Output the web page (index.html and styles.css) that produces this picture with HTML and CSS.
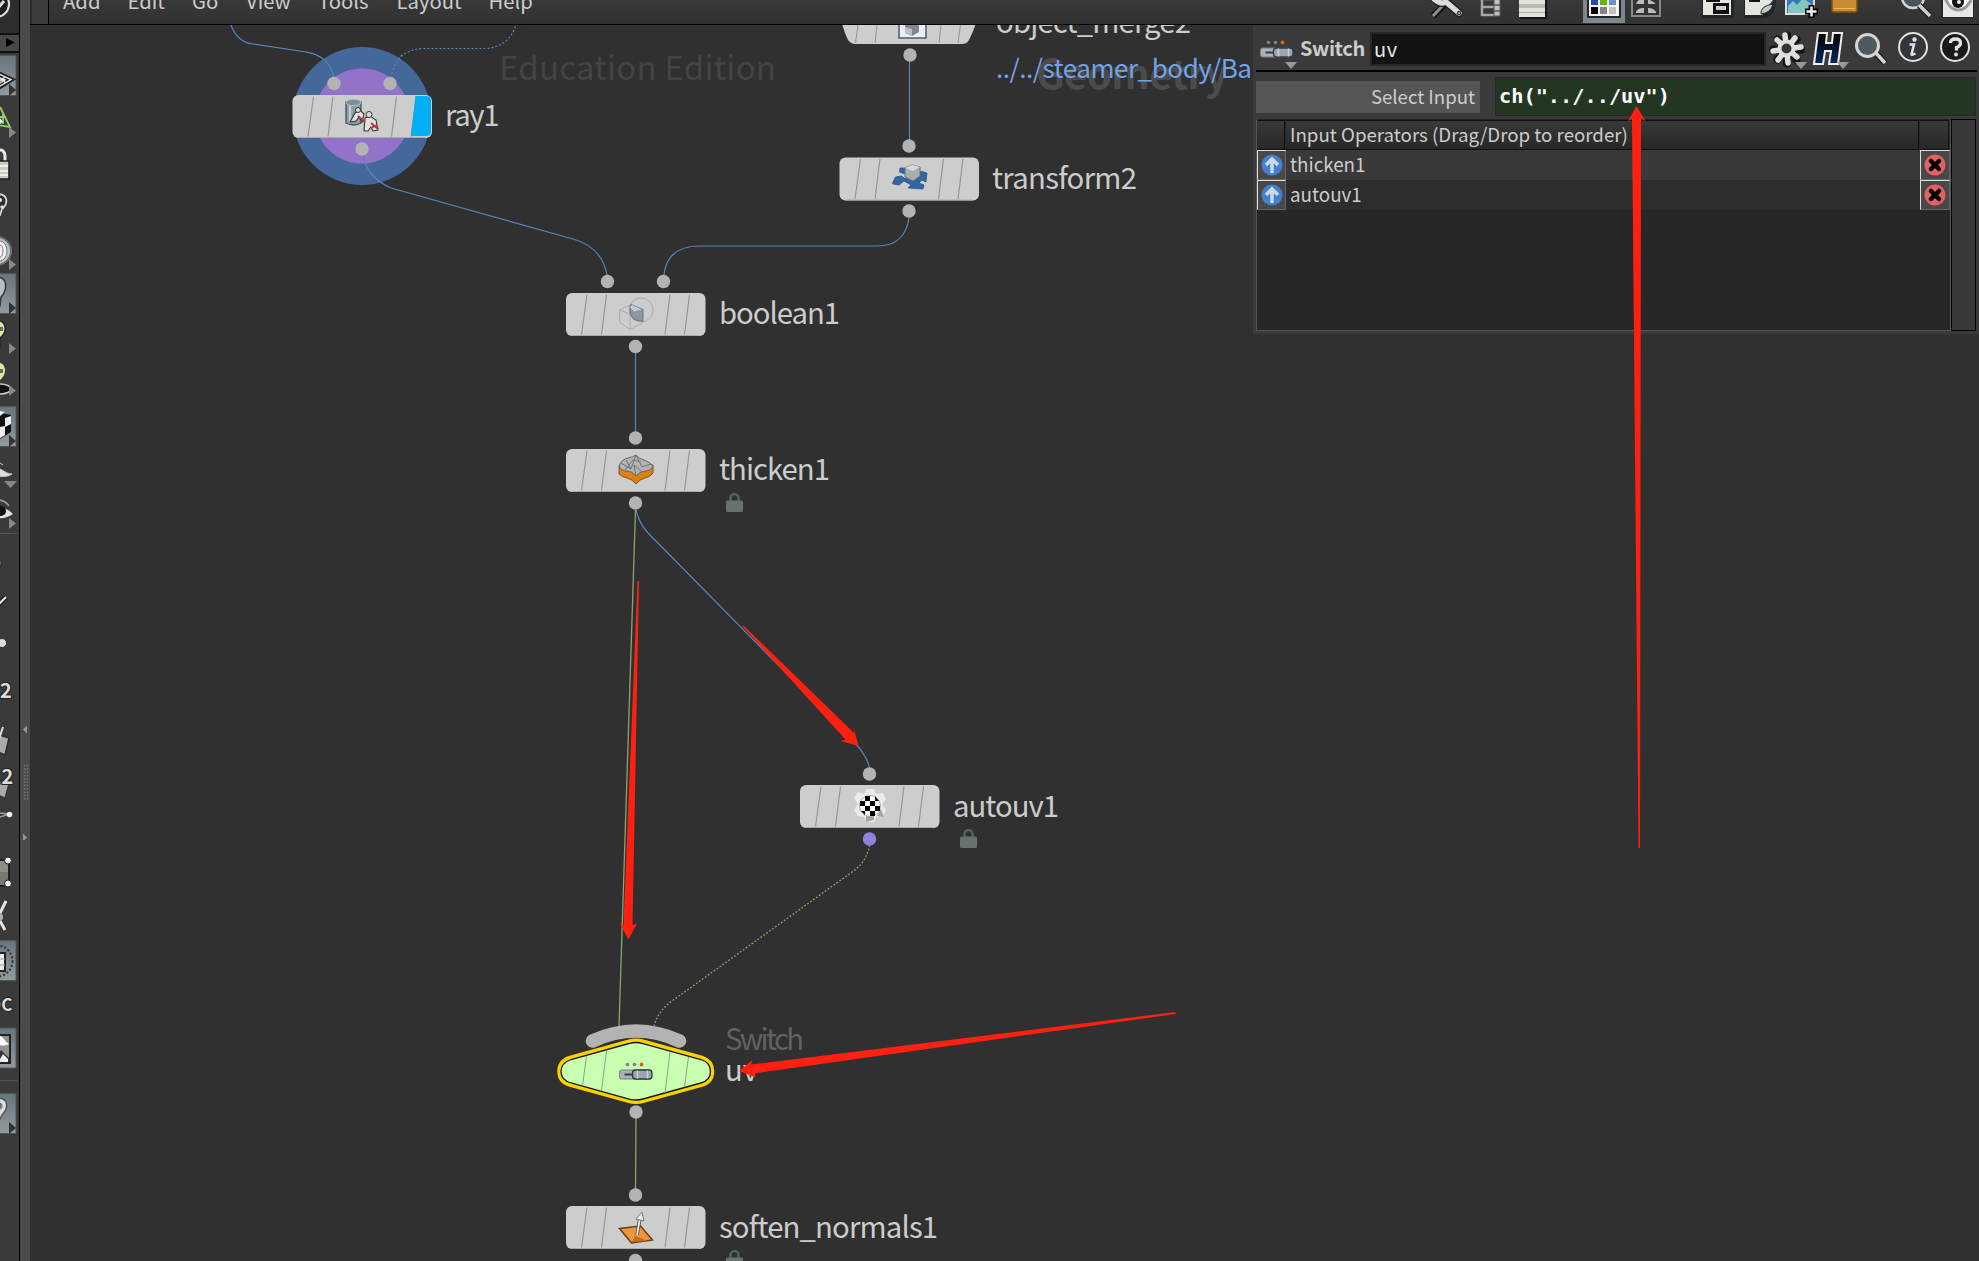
FILE: index.html
```html
<!DOCTYPE html>
<html lang="en">
<head>
<meta charset="utf-8">
<title>Network Editor</title>
<link rel="stylesheet" href="styles.css">
</head>
<body>
<div class="app">
  <aside class="tools">
    <svg height="33" viewBox="0 0 19 33"><rect width="19" height="33" fill="#2d2d2d"/><circle cx="-4" cy="4" r="13" fill="#1c2022" stroke="#ddd" stroke-width="2.2"/><path d="M-2 8L4 1" stroke="#ddd" stroke-width="3"/></svg>
    <svg height="20" viewBox="0 33 19 20"><rect y="33" width="19" height="20" fill="#111"/><rect y="35" width="19" height="16" fill="#484848"/><path d="M6 38v9l9-4.500z" fill="#000"/></svg>
    <svg height="44" viewBox="0 53 19 44"><use href="#sel" y="55"/><path d="M-10 79L0 74l12 5.500L0 87l-10-4z" fill="#222" stroke="#222" stroke-width="4"/><path d="M-10 79L0 74.500l11 5L0 86l-10-4zM-4 80l4-2 5 2-5 3zM-3 76l9 7M5 77l-8 6" fill="none" stroke="#e6e6e6" stroke-width="1.400"/><path d="M9 84v12l7-6z" fill="#333"/></svg>
    <svg height="45" viewBox="0 97 19 45"><path d="M0 107l10 20-12-2M0 117h5M3 114v10" fill="none" stroke="#93cf6a" stroke-width="1.800"/><path d="M0 118l3 4-3 2" fill="#eee"/><use href="#more" y="127"/></svg>
    <svg height="44" viewBox="0 142 19 44"><path d="M-4 160v-4a4.500 6 0 0 1 9 0v6" fill="none" stroke="#e8e8e8" stroke-width="3"/><rect x="-10" y="161" width="19" height="18" fill="#c9c8c1" stroke="#1c1f20" stroke-width="1.500"/><path d="M0 166h8M0 171h8M0 175h8" stroke="#f0f0ea" stroke-width="2"/></svg>
    <svg height="44" viewBox="0 186 19 44"><path d="M-3 194c12 0 11 10 5 15l-2 6h-4" fill="#2b3133" stroke="#d5d5d5" stroke-width="1.800"/><circle cx="0" cy="200" r="2" fill="#eee"/><circle cx="2" cy="207" r="1.700" fill="#ddd"/></svg>
    <svg height="42" viewBox="0 230 19 42"><circle cx="-3" cy="251" r="14" fill="#bfc3c2" stroke="#65747b" stroke-width="2"/><ellipse cx="0" cy="251" rx="7" ry="10" fill="#f3f3f3" stroke="#777"/><ellipse cx="0" cy="251" rx="3" ry="6" fill="none" stroke="#777"/><use href="#more" y="259"/></svg>
    <svg height="43" viewBox="0 272 19 43"><use href="#sel" y="273"/><path d="M-4 277c14 0 10 15 5 20l-1 9h-5" fill="#bbbfbd" stroke="#30383b" stroke-width="1.500"/><path d="M9 302v12l7-6z" fill="#333"/></svg>
    <svg height="44" viewBox="0 315 19 44"><path d="M-5 320c13 0 12 13 5 18v8h-5" fill="#e4e3a2" stroke="#22282b" stroke-width="1.500"/><path d="M0 329h3" stroke="#666" stroke-width="4"/><use href="#more" y="343"/></svg>
    <svg height="44" viewBox="0 359 19 44"><ellipse cx="0" cy="389" rx="11" ry="5" fill="#111" stroke="#ccc" stroke-width="1.500"/><path d="M-5 362c13 0 12 13 5 18v7h-5" fill="#e4e3a2"/><path d="M0 371h3" stroke="#666" stroke-width="4"/><use href="#more" y="385"/></svg>
    <svg height="46" viewBox="0 403 19 46"><use href="#sel" y="406"/><path d="M-4 412l15 3v17l-13 8h-2z" fill="#111"/><path d="M0 411l5 1-5 4zM5 418l6-2v8l-6 3zM0 427l5-1v9l-5 3z" fill="#eee"/><path d="M9 435v12l7-6z" fill="#333"/></svg>
    <svg height="43" viewBox="0 449 19 43"><path d="M0 463l3 2M-3 468c7 2 9 6 15 6-6 4-12 2-15 2z" fill="#ddd" stroke="#ccc"/><path d="M4 481h13l-6.500 7z" fill="#888"/></svg>
    <svg height="42" viewBox="0 492 19 42"><path d="M-2 500q7 0 11 6" stroke="#999" fill="none" stroke-width="1.500"/><path d="M-2 506q9 2 15 8-7 5-15 4z" fill="#e3e3dc"/><circle cx="1" cy="511" r="5" fill="#111"/><use href="#more" y="518"/><path d="M0 533.500h17" stroke="#555"/></svg>
    <svg height="46" viewBox="0 534 19 46"><circle cx="-2" cy="563" r="4" fill="#555" stroke="#24282a"/></svg>
    <svg height="45" viewBox="0 580 19 45"><path d="M-2 605l8-8" stroke="#1e2426" stroke-width="5"/><path d="M-2 605l8-8" stroke="#e5e5e5" stroke-width="2"/></svg>
    <svg height="45" viewBox="0 625 19 45"><circle cx="2" cy="643" r="4.500" fill="#ddd" stroke="#333"/></svg>
    <svg height="40" viewBox="0 670 19 40"><text x="0" y="698" class="tool-text">2</text></svg>
    <svg height="55" viewBox="0 710 19 55"><path d="M-4 734l13 4-4 17-12-5z" fill="#a9aaa7" stroke="#282c2d" stroke-width="1.500"/><path d="M-3 745l6-18" stroke="#ddd" stroke-width="2"/></svg>
    <svg height="41" viewBox="0 765 19 41"><path d="M-4 780l13 3-4 15-11-5z" fill="#aaa" stroke="#282c2d"/><text x="-5" y="784" class="tool-text">.2</text></svg>
    <svg height="39" viewBox="0 806 19 39"><path d="M0 817l9-3M0 813l9 1" stroke="#9aa192" stroke-width="1.500"/><circle cx="9.500" cy="814.500" r="2.800" fill="#f1f1f1"/></svg>
    <svg height="50" viewBox="0 845 19 50"><path d="M-5 860H9v26H-5z" fill="#767873" stroke="#1d2223" stroke-width="2"/><path d="M-3 861H8v11H-3z" fill="#8c8e88"/><circle cx="8" cy="860.500" r="3.500" fill="#eee" stroke="#222"/><circle cx="8" cy="883.500" r="3.500" fill="#eee" stroke="#222"/></svg>
    <svg height="43" viewBox="0 895 19 43"><path d="M6 901L0 913M0 921l5 9" stroke="#e5e5e5" stroke-width="3"/><circle cx="-1" cy="917" r="4" fill="#b5b2a2"/></svg>
    <svg height="46" viewBox="0 938 19 46"><use href="#sel" y="940"/><circle cx="-3" cy="961" r="15.500" fill="none" stroke="#333" stroke-dasharray="2 2" stroke-width="2"/><path d="M-8 953H5v18H-8z" fill="#eee" stroke="#222" stroke-width="2"/><path d="M-3 959h8M-3 965h8" stroke="#999"/></svg>
    <svg height="40" viewBox="0 984 19 40"><text x="-11" y="1011" class="tool-text dc">DC</text></svg>
    <svg height="46" viewBox="0 1024 19 46"><use href="#sel" y="1027.500"/><path d="M-3 1035H10v28H-3z" fill="#8f918e" stroke="#222" stroke-width="2"/><path d="M0 1036c4 1 4 5 9 8-4 2-8 2-9 1z" fill="#fff"/><path d="M-2 1056l3-6 8 8v4H-2z" fill="#333"/><path d="M0 1059l3-5 5 5v3H0z" fill="#eee"/></svg>
    <svg height="20" viewBox="0 1070 19 20"><path d="M0 1080.500h17" stroke="#555"/></svg>
    <svg height="46" viewBox="0 1090 19 46"><use href="#sel" y="1093"/><path d="M-3 1098c13 0 11 11 5 17l-4 8h-3" fill="#ddd" stroke="#555" stroke-width="1.500"/><circle cx="-1" cy="1106" r="3.500" fill="#777"/><path d="M9 1122v12l7-6z" fill="#333"/></svg>
  </aside>
  <div class="splitter">
    <svg width="10" height="120" viewBox="20 720 10 120"><path d="M27 725.500v8l-4-4zM23 833.500v8l4-4z" fill="#999"/><path d="M24.500 765v35M27.500 765v35" stroke="#777" stroke-width="1.700" stroke-dasharray="1.500 1.800"/></svg>
  </div>
  <main class="editor">
    <header class="topbar">
      <div class="grip"></div>
      <nav class="menu"><span class="m-add">Add</span><span class="m-edit">Edit</span><span class="m-go">Go</span><span class="m-view">View</span><span class="m-tools">Tools</span><span class="m-layout">Layout</span><span>Help</span></nav>
      <div class="icons">
        <svg width="50" viewBox="1425 0 50 24"><path d="M1433 16l17-16" stroke="#111" stroke-width="6"/><path d="M1433 16l15-16" stroke="#8d8f8a" stroke-width="3"/><path d="M1434-1q7 6 12 3l13 11" fill="none" stroke="#222" stroke-width="8" stroke-linecap="round"/><path d="M1434-1q7 6 12 3l13 11" fill="none" stroke="#ddddd7" stroke-width="5.500" stroke-linecap="round"/><circle cx="1459" cy="13" r="1.800" fill="#999" stroke="#222"/></svg>
        <svg width="35" viewBox="1475 0 35 24"><path d="M1482-2v17h13M1482 7h13M1484-1h10" fill="none" stroke="#a5a8a0" stroke-width="2.500"/><path d="M1494-1h6v6h-6zm0 6h6v6h-6zm0 6h6v5h-6z" fill="#bfc0b9" stroke="#555"/></svg>
        <svg width="60" viewBox="1510 0 60 24"><path d="M1520 0h27v19h-27z" fill="#161616"/><path d="M1519 0h26v17h-26z" fill="#e4e4df"/><path d="M1519 4h26v4h-26z" fill="#bbbcb4"/><path d="M1519 12h26v1h-26z" fill="#b0b0aa"/></svg>
        <svg width="57" viewBox="1570 0 57 24"><path d="M1583 0h42v23h-42z" fill="#7d878c"/><path d="M1587 0h34v18h-34z" fill="#22272a"/><path d="M1589 0h30v16h-30z" fill="#f4f4f4"/><path d="M1591 0h7v5h-7z" fill="#264ba0"/><path d="M1600 0h7v5h-7z" fill="#68b70e"/><path d="M1609 0h7v5h-7z" fill="#6b93c4"/><path d="M1591 7h7v7h-7z" fill="#000"/><path d="M1600 7h7v7h-7z" fill="#83847f"/><path d="M1609 7h7v7h-7z" fill="#c1c3bb"/></svg>
        <svg width="63" viewBox="1627 0 63 24"><path d="M1632-4h28v20h-28z" fill="#333" stroke="#888" stroke-width="2"/><path d="M1636 4q2-5 8-7v7zM1648-1q4 2 8 5h-8zM1636 12q1-4 8-4v5h-8zM1648 8q6 0 8 4v1h-8z" fill="#bbb"/></svg>
        <svg width="50" viewBox="1690 0 50 24"><path d="M1702 0h32v18h-32z" fill="#20272a"/><path d="M1703 0h28v15h-28z" fill="#e7e7e2"/><path d="M1706 0h14v2h-14zM1713 3h16v11h-16z" fill="#111"/><path d="M1716 6h10v4h-10z" fill="#ccc"/></svg>
        <svg width="40" viewBox="1740 0 40 24"><path d="M1744 0h32q-1 18-13 18h-19z" fill="#20272a"/><path d="M1745 0h28l-8 10-3 5h-17z" fill="#e5e5df"/><path d="M1749 0h11v2h-11z" fill="#111"/><path d="M1761 14q-1-8 12-10-2 9-12 10z" fill="#c6c7c0" stroke="#222"/></svg>
        <svg width="45" viewBox="1780 0 45 24"><path d="M1785-4h30v19h-30z" fill="#ddd"/><path d="M1787-4h26v17h-26z" fill="#347ab8"/><path d="M1788 13V6l5-5 4 4 6-7 8 6v9z" fill="#83c6be"/><path d="M1811.500 5v13M1805 11.500h13" stroke="#000" stroke-width="6"/><path d="M1811.500 6.500v10M1806.500 11.500h10" stroke="#eee" stroke-width="2.500"/></svg>
        <svg width="55" viewBox="1825 0 55 24"><path d="M1832-2h25v12q0 2-2 2h-21q-2 0-2-2z" fill="#c98a30" stroke="#82500c" stroke-width="1.500"/><path d="M1834 8.500h21" stroke="#eab660"/></svg>
        <svg width="57" viewBox="1880 0 57 24"><circle cx="1913" cy="-3" r="11" fill="#49545a" stroke="#d5d5cf" stroke-width="2.500"/><path d="M1919 5l11 11" stroke="#1b1b1b" stroke-width="6"/><path d="M1919 5l11 11" stroke="#d0d0ca" stroke-width="3.500"/></svg>
        <svg width="42" viewBox="1937 0 42 24"><path d="M1941 0h33v18h-33z" fill="#22282a"/><path d="M1943 0h30v17h-30z" fill="#e7e7e5"/><path d="M1945-2q5 12 13 12t13-10" fill="#fff" stroke="#999" stroke-width="3"/><circle cx="1958" cy="2" r="6" fill="#111"/><circle cx="1959" cy="2" r="2" fill="#eee"/></svg>
      </div>
    </header>
    <div class="workspace">
      <svg class="network" viewBox="30 25 1949 1236">
        <defs>
          <linearGradient id="steel" x2="0" y2="1"><stop stop-color="#66757c"/><stop offset="1" stop-color="#929a9e"/></linearGradient>
          <linearGradient id="navy" x2="0" y2="1"><stop stop-color="#000"/><stop offset="1" stop-color="#06295c"/></linearGradient>
          <g id="sel"><path d="M-1 .5h17v40H-1z" fill="url(#steel)" stroke="#555"/></g>
          <path id="more" d="M9 0v11l7-5.500z" fill="#888"/>
          <g id="node"><rect width="139.500" height="43" rx="6" fill="#cdcdcd"/><path d="M6 42.500h127" stroke="#aaa"/><use href="#slits"/></g>
          <path id="slits" d="M21 1.500L15.500 41.500M40.500 1.500L35.500 41.500M104 1.500l-5 40M123.500 1.500L118.500 41.500" stroke="#929292" stroke-width="1.100"/>
          <g id="lock"><path d="M4.500 9V5.500a4 4 0 0 1 8 0V9" fill="none" stroke="#536160" stroke-width="2.500"/><rect y="8" width="17" height="11.500" rx="1.500" fill="#667270"/></g>
          <g id="switch"><circle cx="9" cy="3" r="1.800" fill="#79818a"/><circle cx="16" cy="3" r="1.800" fill="#79818a"/><circle cx="23" cy="3" r="1.900" fill="#d46b14"/><rect x="1" y="8.500" width="32" height="9" rx="2" fill="#aab2b8" stroke="#788087"/><path d="M6 13h10" stroke="#333b44" stroke-width="2"/><rect x="14" y="8.500" width="19.500" height="9" rx="3" fill="#9ba5b0" stroke="#333942" stroke-width="1.300"/><path d="M19 9v8M29 9v8" stroke="#c8d0d8" stroke-width="1.500"/></g>
        </defs>
        <g fill="none" stroke="#5784bd" stroke-width="1.200">
          <path d="M231 25Q237 42 253 44L306 52Q330 56 334 78" />
          <path d="M909.500 60V140M909 218Q905 246 877 246H700Q667 246 664 275M635.500 352V432"/>
          <path d="M636 510Q639 523 648 533L855 743Q867 756 869.500 768"/>
          <path d="M391 78Q396 48.500 425 48.500H485Q508 48 516 25" stroke-dasharray="2 2"/>
        </g>
        <g stroke="#8ba36c" stroke-width="1.300" fill="none"><path d="M635.500 510L619 1026M636 1118L635.500 1190"/><path d="M869.500 845Q867 862 852 872L672 1001Q658 1011 654 1026" stroke-dasharray="1.800 1.800"/></g>
        <text class="wm" x="499" y="80" textLength="277">Education Edition</text>
        <circle cx="362" cy="116" r="69" fill="#45689a"/><circle cx="362" cy="116" r="47.500" fill="#9273c9"/>
        <g fill="none" stroke="#5784bd" stroke-width="1.200"><path d="M306 52Q330 56 334 78M363 156Q368 178 391 188L573 239Q602 247 607 275"/><path d="M391 78Q394 62 403 54" stroke-dasharray="2 2"/></g>
        <use href="#node" x="292.500" y="95"/><path d="M415.500 96H426q5 0 5 5v30q0 5-5 5H411z" fill="#00aef5"/>
        <path d="M841 20h136q-3 10-8 20-2 4-7 4H855q-4 0-7-4-4-8-7-20z" fill="#cdcdcd"/><path d="M858 25l-2.500 18M877 25l-2 18M941 25l-2 18M960.500 25l-2.500 18" stroke="#929292"/>
        <use href="#node" x="839.500" y="157.500"/><use href="#node" x="566" y="293"/><use href="#node" x="566" y="449"/><use href="#node" x="800" y="785"/><use href="#node" x="566" y="1206"/>
        <g fill="#b3b3b3"><circle cx="334" cy="83.500" r="6.700"/><circle cx="390" cy="83.500" r="6.700"/><circle cx="362" cy="149" r="6.700"/><circle cx="910" cy="55" r="6.700"/><circle cx="909" cy="146" r="6.700"/><circle cx="909" cy="211" r="6.700"/><circle cx="607.500" cy="281.500" r="6.700"/><circle cx="663.500" cy="281.500" r="6.700"/><circle cx="635.500" cy="346.500" r="6.700"/><circle cx="635.500" cy="438" r="6.700"/><circle cx="635.500" cy="503" r="6.700"/><circle cx="869.500" cy="774" r="6.700"/><circle cx="869.500" cy="839" r="6.700" fill="#9180dd"/><circle cx="636" cy="1112" r="6.700"/><circle cx="635.500" cy="1195" r="6.700"/><circle cx="635.500" cy="1260.500" r="6.700"/></g>
        <!-- switch node -->
        <path d="M592.500 1041Q636 1021 679.500 1041" fill="none" stroke="#b3b3b3" stroke-width="13.500" stroke-linecap="round"/>
        <path d="M628 1041.500Q636 1039 644 1041.500L702 1057.500Q712.500 1061 712.500 1071.500T702 1085L644 1101Q636 1103.500 628 1101L570 1085Q559 1082 559 1071.500T570 1057.500Z" fill="#c8ffb0" stroke="#fbd100" stroke-width="3.500"/>
        <path d="M629 1043.500Q636 1041.500 643 1043.500L701 1059.500Q710.500 1062.500 710.500 1071.500T701 1083L643 1099Q636 1101 629 1099L571 1083Q561 1080 561 1071.500T571 1059.500Z" fill="none" stroke="#15180c" stroke-width="1.300"/>
        <path d="M586.500 1056l-4 30M606.500 1051l-5 40M670 1052l-5 41M688.500 1057l-4 30" stroke="#88a87b"/>
        <use href="#switch" x="618.500" y="1061.500"/>
        <!-- node icons -->
        <g><path d="M346 102v21q8 4 15 0v-21z" fill="#899ca6" stroke="#41545f" stroke-width="1.300"/><path d="M350 106v17" stroke="#c0cdd4" stroke-width="2.500"/><ellipse cx="353.500" cy="102.500" rx="7.500" ry="3.200" fill="#7d919b" stroke="#b5c1c8"/><path d="M355 113l5-3 4 4-2 8-3-5-3 4-6 1zM364 131l1-13 5-2 6 4 2 10-5 1-2-4-3 4z" fill="#e0e0df" stroke="#333" stroke-width="1.100"/><circle cx="358" cy="110" r="2.500" fill="#ddd" stroke="#333"/><circle cx="369" cy="114.500" r="3" fill="#ddd" stroke="#333"/><path d="M358 116l7 6M371 123l7 6M371 128l6-3" stroke="#b83337" stroke-width="1.800"/></g>
        <path d="M899 24h27v14h-27z" fill="#eee" stroke="#41607a" stroke-width="1.500"/><path d="M905 25h14v7l-7 4-7-3z" fill="#7f898d"/><path d="M905 27l7 2v7l-7-3z" fill="#b9c1c3"/>
        <g><path d="M900 168h8l-1 3 10 3 3-3 7 2-1 9-4-2-3 3 5 2-1 4-15-1 3-3-7-4-5 4-6-1-.5-1 3-6 6-1 4 3 2-4-8-3z" fill="#3166a6" stroke="#204d83" stroke-width=".7"/><path d="M905 168l7-3 8 2v9l-7 5-8-4z" fill="#a9aeae" stroke="#6c7375"/><path d="M905 168l8 3 7-4-8-2z" fill="#d9dcda"/></g>
        <g fill="none" stroke="#a9acac"><path d="M619.500 310l10-5 13 6v12l-12.500 6.500-10-7zM619.500 310l10.500 4v15M630 314l12-4"/><circle cx="641" cy="310" r="12"/><path d="M631 304.500l12 5v12l-9-2q-5-5-4-12z" fill="#8a98a2" stroke="#66747d"/><path d="M632 305l10 4.500-8 2-4-4z" fill="#c3cbd0" stroke="none"/></g>
        <g stroke-linejoin="round"><path d="M619 466v8q3 3 8 4t9 6q4-5 9-6t8-5v-8z" fill="#dd8116" stroke="#855019"/><path d="M619 466q3-7 9-8 5-1 8-3 3 4 8 5 6 2 9 6-2 5-8 5-6 1-9 5-4-5-9-5-6 0-8-5z" fill="#b1b4b3" stroke="#636666"/><path d="M621 463l10 6 5-14 6 12 9-3M631 469l-5-9M636 476l-2-11 8 7M625 470l8-10 8 2" fill="none" stroke="#717474"/></g>
        <g><path d="M866 789h8l2 5 7-1 3 6-4 5 4 6-3 6-7 1-2 5h-8l-2-5-6-1-4-6 4-6-4-6 4-6 6 2z" fill="#ebebeb"/><path d="M877 816l4-7 3 8zM866 822v-6l4-4 4 4v4z" fill="#a4a4a1"/><circle cx="870" cy="806" r="10.500" fill="#fff" stroke="#aaa"/><path d="M865 796h5v5h-5zM875 796l4 5h-4zM860 801h5v5h-5zM870 801h5v5h-5zM865 806h5v5h-5zM875 806h5v5h-5zM861 811h4v4zM870 811h5v5h-5z" fill="#000"/></g>
        <path d="M619.500 1228.500l21-2.500 12 14-21 3z" fill="#ee963d" stroke="#6b3b13" stroke-width="1.500"/><path d="M635 1236l13 5-16 1z" fill="#c36c19"/><path d="M637 1235l3-17" stroke="#444" stroke-width="3.500"/><path d="M637 1235l3-17" stroke="#eee" stroke-width="1.800"/><path d="M636 1219l6-7 2 9z" fill="#eee" stroke="#777"/>
        <use href="#lock" x="726" y="492.500"/><use href="#lock" x="960" y="828.500"/><use href="#lock" x="726" y="1249.500"/>
        <g class="names"><text x="445" y="126" textLength="54.500">ray1</text><text x="996" y="33" textLength="195">object_merge2</text><text x="992" y="189" textLength="145">transform2</text><text x="719" y="324" textLength="121">boolean1</text><text x="719" y="479.500" textLength="111">thicken1</text><text x="953" y="816.500" textLength="106">autouv1</text><text x="719" y="1237.500" textLength="219">soften_normals1</text><text x="725" y="1081">uv</text><text class="type" x="725" y="1050" textLength="79">Switch</text></g>
        <text class="geo" x="1036" y="89" textLength="192">Geometry</text><text class="path" x="996" y="78" textLength="256">../../steamer_body/Ba</text>
      </svg>
      <section class="panel">
        <div class="titlebar">
          <svg width="44" height="42" viewBox="1256 28 44 42"><use href="#switch" x="1259.500" y="39.500"/><path d="M1285 62h12l-6 7z" fill="#999"/></svg>
          <b>Switch</b><div class="namefield">uv</div>
          <svg width="42" height="42" viewBox="1768 28 42 42"><g stroke="#161616" stroke-width="8" stroke-linecap="round"><path d="M1787 35.500v28M1773 49.500h28M1777.500 39.500l19 20M1796.500 39.500l-19 20"/></g><g stroke="#dfe0dc" stroke-width="5.500" stroke-linecap="round"><path d="M1785 35l3 28M1773 51l28-4M1777 40l20 17M1795 38l-17 22"/></g><circle cx="1786.500" cy="48.500" r="7" fill="#343738" stroke="#dfe0dc" stroke-width="4"/><path d="M1795 62h12l-6 7z" fill="#999"/></svg>
          <svg width="42" height="42" viewBox="1810 28 42 42"><path d="M1818 33h9l-1 10h6l1-10h9l-4 31h-9l2-13h-6l-2 13h-9z" fill="url(#navy)" stroke="#eee" stroke-width="2"/><path d="M1837 62h12l-6 7z" fill="#999"/></svg>
          <svg width="41" height="42" viewBox="1852 28 41 42"><path d="M1876 53l9 10" stroke="#161616" stroke-width="6"/><circle cx="1867.500" cy="45.500" r="11" fill="#4d5a60" stroke="#d5d6d1" stroke-width="3"/><path d="M1876 53l9 10" stroke="#d5d6d1" stroke-width="3.500"/></svg>
          <svg width="42" height="42" viewBox="1893 28 42 42"><circle cx="1913" cy="47" r="14" fill="#30383d" stroke="#e2e2df" stroke-width="2"/><circle cx="1914.500" cy="39.500" r="2.200" fill="#e2e2df"/><path d="M1909.500 44.500h4.500l-2.500 10q0 1 4-1" fill="none" stroke="#e2e2df" stroke-width="2.500"/></svg>
          <svg width="42" height="42" viewBox="1935 28 42 42"><circle cx="1955" cy="47" r="14" fill="#181b1d" stroke="#e2e2df" stroke-width="2"/><path d="M1950.500 43q0-4 5-4t5 4q0 3-4 4.500v3" fill="none" stroke="#e2e2df" stroke-width="3.300"/><circle cx="1956" cy="54.500" r="2" fill="#e2e2df"/></svg>
        </div>
        <div class="param"><span class="label">Select Input</span><div class="expr">ch("../../uv")</div></div>
        <div class="listing">
          <div class="grid">
            <div class="row head"><span></span><span>Input Operators (Drag/Drop to reorder)</span><span></span></div>
            <div class="row odd"><i><svg class="badge" viewBox="0 0 22 22"><circle cx="11" cy="11" r="10.500" fill="#4481cd"/><path d="M11 19V6M5 11l6-6 6 6" fill="none" stroke="#cbd8e8" stroke-width="3.500"/></svg></i><span>thicken1</span><i><svg class="badge" viewBox="0 0 22 22"><circle cx="11" cy="11" r="10.500" fill="#e75f60"/><path d="M7 7l8 8M15 7l-8 8" stroke="#000" stroke-width="4.500" stroke-linecap="round"/></svg></i></div>
            <div class="row even"><i><svg class="badge" viewBox="0 0 22 22"><circle cx="11" cy="11" r="10.500" fill="#4481cd"/><path d="M11 19V6M5 11l6-6 6 6" fill="none" stroke="#cbd8e8" stroke-width="3.500"/></svg></i><span>autouv1</span><i><svg class="badge" viewBox="0 0 22 22"><circle cx="11" cy="11" r="10.500" fill="#e75f60"/><path d="M7 7l8 8M15 7l-8 8" stroke="#000" stroke-width="4.500" stroke-linecap="round"/></svg></i></div>
          </div>
          <div class="scroll"></div>
        </div>
      </section>
    </div>
  </main>
  <svg class="arrows" viewBox="0 0 1979 1261" fill="#ff2012">
    <path d="M637.500 581h1.500L632.500 925l4.500-1.500-8.500 16-8.500-16 3.500 1.500z"/>
    <path d="M742.500 626.500l1-1L854 733l-.500-5.500L858.500 746 840.500 741l5-1.500z"/>
    <path d="M1175.500 1012v2L754 1073.500l2 4-17-6.500 13.500-11-1.500 4.500z"/>
    <path d="M1638.500 848h1.500L1641 119l4.500 2-9-15-8.500 15 4-2z"/>
  </svg>
</div>
</body>
</html>
```

FILE: styles.css
```css
* { box-sizing: border-box; }
body { margin: 0; background: #303030; font-family: "Noto Sans CJK SC", "Noto Sans", sans-serif; color: #ccc; overflow: hidden; }
svg { display: block; flex: none; }
.app { position: relative; display: flex; width: 1979px; height: 1261px; overflow: hidden; }
.tools { width: 20px; flex: none; background: #3a3a3a; border-right: 1px solid #000; overflow: hidden; }
.tools svg { width: 19px; }
.tool-text { font-size: 20px; font-weight: bold; fill: #ddd; stroke: #222; stroke-width: 2px; paint-order: stroke; }
.tool-text.dc { font-size: 17px; }
.splitter { width: 10px; flex: none; background: #4a4a4a; padding-top: 720px; }
.editor { flex: 1; display: flex; flex-direction: column; min-width: 0; }
.topbar { height: 25px; flex: none; display: flex; overflow: hidden; background: linear-gradient(#383838, #323232); border-bottom: 1px solid #000; }
.grip { width: 19px; border-left: 2px solid #2b2b2b; border-right: 1px solid #000; background: #3c3c3c; }
.menu { display: flex; margin-left: 14px; margin-top: -14px; font-size: 20.3px; line-height: 29px; white-space: nowrap; }
.m-add, .m-edit { width: 64.5px; }
.m-go { width: 54px; }
.m-view { width: 72px; }
.m-tools { width: 78.5px; }
.m-layout { width: 92px; }
.icons { display: flex; margin-left: auto; }
.icons svg { height: 24px; }
.workspace { position: relative; flex: 1; display: flex; justify-content: flex-end; align-items: flex-start; }
.network { position: absolute; inset: 0; width: 1949px; height: 1236px; }
.names { font-size: 29.3px; fill: #ccc; }
.type { fill: #616161; }
.wm { font-size: 33px; fill: #444; }
.geo { font-size: 40px; font-weight: bold; fill: #4b4b4b; }
.path { font-size: 26px; fill: #72a3e6; }
.panel { position: relative; width: 726px; height: 309px; padding: 3px 3px 0; background: #3a3a3a; }
.titlebar { display: flex; height: 44px; margin-right: -1px; border-bottom: 2px solid #000; align-items: flex-start; font-size: 20px; }
.titlebar b { width: 71px; line-height: 39px; letter-spacing: -.4px; }
.namefield { flex: 1; height: 34px; margin: 4px 2px 0 -1px; padding-left: 2px; border: 2px solid #262626; background: #131313; color: #e8e8e8; line-height: 29px; font-size: 20px; letter-spacing: .5px; }
.param { display: flex; height: 39px; margin-top: 5px; align-items: center; }
.label { width: 224px; height: 32px; padding-right: 5px; background: #555; text-align: right; font-size: 18.6px; line-height: 30px; margin-right: 15px; }
.expr { flex: 1; height: 39px; border: 1px solid #272727; background: #223622; color: #fff; padding-left: 3px; font: bold 20.3px/37px "DejaVu Sans Mono", monospace; }
.listing { display: flex; height: 212px; margin-top: 3px; }
.grid { width: 695px; border: 1px solid #555; border-top-color: #222; background: #272727; }
.row { display: grid; grid-template-columns: 29px 1fr 30px; height: 30px; font-size: 18.8px; line-height: 28px; }
.row > :nth-child(2) { padding-left: 4px; }
.head > :nth-child(2) { font-size: 18.7px; line-height: 26px; }
.head span { border: solid #111; border-width: 1px 1px 1px 0; background: linear-gradient(#393939, #272727); margin-right: 1px; }
.odd { background: #393939; }
.even { background: #2d2d2d; }
.row i { display: flex; align-items: center; justify-content: center; background: #484848; border: 1px solid #666; border-top-color: #ddd; border-left-color: #ddd; }
.badge { width: 22px; height: 22px; }
.scroll { flex: 1; border: 1px solid #000; background: #393939; }
.arrows { position: absolute; inset: 0; width: 1979px; height: 1261px; pointer-events: none; }
```
